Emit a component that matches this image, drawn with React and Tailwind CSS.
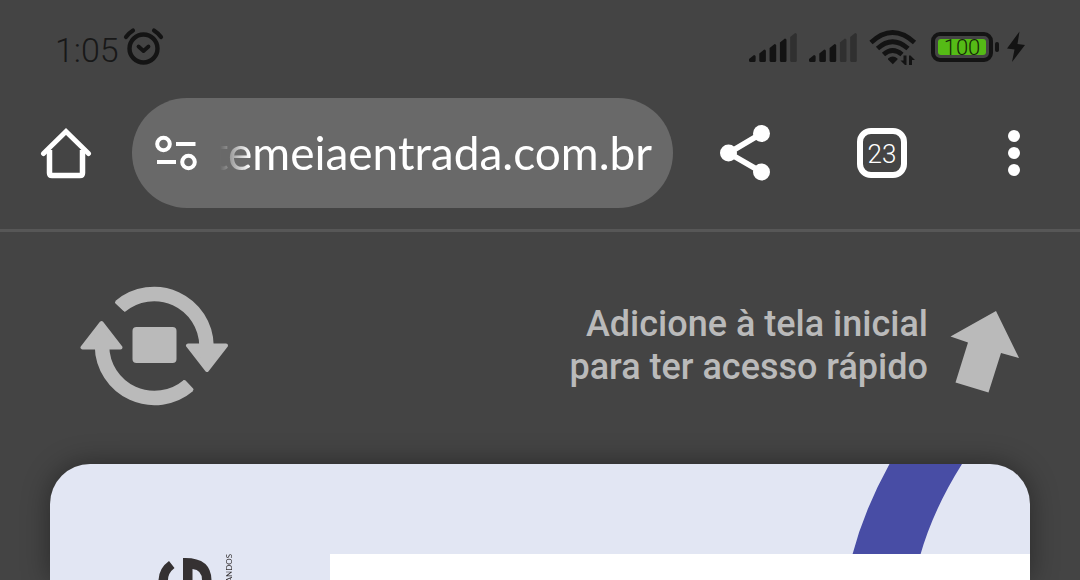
import React from "react";

function AlarmIcon() {
  return (
    <svg viewBox="124 27 42 40" className="h-10 w-[42px]" fill="none" stroke="#141414" strokeLinecap="round" aria-hidden="true">
      <circle cx="144.500" cy="48.500" r="14" strokeWidth="4.400" />
      <path d="M139.500 46.500l5 4.500 5-4.500" strokeWidth="3.800" strokeLinejoin="round" />
      <path d="M127 37q3-4 7-6.500M162 37q-3-4-7-6.500" strokeWidth="4.200" />
    </svg>
  );
}

function SignalIcon({ level }) {
  const tops = [22, 16.5, 11, 5.5, 0];
  return (
    <svg viewBox="0 -1 48 30" className="h-[30px] w-12" aria-hidden="true">
      {tops.map((top, i) => (
        <path
          key={top}
          d={`M${i * 10.3} ${top + 4}L${i * 10.3 + 5} ${top}Q${i * 10.3 + 6.6} ${top} ${i * 10.3 + 6.6} ${top + 1.5}V27.500q0 1.500-1.500 1.500H${i * 10.3 + 1.5}q-1.500 0-1.500-1.500z`}
          fill={i < level ? "#131313" : "#303030"}
        />
      ))}
    </svg>
  );
}

function WifiIcon() {
  return (
    <svg viewBox="869 28 48 38" className="h-[38px] w-12" fill="none" stroke="#131313" aria-hidden="true">
      <path d="M871 42.500Q892.500 22.500 914.500 42.500M877.500 48.500Q892.500 35 908 48.500M883.500 54.500Q892.500 46.500 902 54.500" strokeWidth="4.800" />
      <path d="M888 58.500q4.700-4 9.500 0v1l-4.700 4.800-4.800-4.800z" fill="#131313" stroke="none" />
      <path d="M906.500 55.500V65h-1.500l-4.500-4.500h3v-5zM909 65v-9.500h1.500l4.500 4.500h-3v5z" fill="#131313" stroke="none" />
    </svg>
  );
}

function BatteryIcon() {
  return (
    <div className="flex items-center gap-[2px]">
      <div className="flex h-[30px] w-[62px] rounded-[9px] border-4 border-[#141414] p-[3px]">
        <div className="flex flex-1 items-center justify-center rounded-[3px] bg-[#55bb16] pt-px text-[22px] leading-none font-light text-[#142608]">100</div>
      </div>
      <div className="h-[10px] w-[4px] rounded-full bg-[#141414]" />
    </div>
  );
}

function StatusBar() {
  return (
    <header className="flex h-[98px] items-center justify-between pr-[54px] pb-1 pl-[55px] font-['Roboto',sans-serif]">
      <div className="flex items-center gap-1">
        <time className="pt-[5px] text-[34px] leading-10 font-light text-[#181818]">1:05</time>
        <AlarmIcon />
      </div>
      <div className="flex items-center gap-3">
        <SignalIcon level={4} />
        <SignalIcon level={3} />
        <WifiIcon />
        <div className="flex items-center gap-[7px] pl-[2px]">
          <BatteryIcon />
          <svg viewBox="1006 32 20 32" className="h-8 w-5" fill="#131313" aria-hidden="true">
            <path d="M1019.500 32.500L1007 49.500l7.500 1-2.500 12.500 13-17-7.500-1z" />
          </svg>
        </div>
      </div>
    </header>
  );
}

function Toolbar() {
  return (
    <nav className="flex items-center border-b-[3px] border-[#575757] pr-14 pb-[21px] pl-10 text-white">
      <button type="button" aria-label="Início" className="mr-10">
        <svg viewBox="40 127 52 52" className="size-[52px]" fill="none" stroke="currentColor" aria-hidden="true">
          <path d="M43.500 153.500L66 131.500 88.500 153.500" strokeWidth="5" strokeLinecap="round" strokeLinejoin="miter" />
          <path d="M49.500 150v23q0 2.500 2.500 2.500h28q2.500 0 2.500-2.500v-23" strokeWidth="5.500" />
        </svg>
      </button>
      <div className="flex h-[110px] min-w-0 flex-1 items-center rounded-full bg-[#696969] pr-[21px] pl-[22px]">
        <button type="button" aria-label="Informações do site">
          <svg viewBox="154 134 44 38" className="h-[38px] w-11" fill="none" stroke="currentColor" strokeWidth="4" aria-hidden="true">
            <circle cx="163.500" cy="144" r="6.300" />
            <circle cx="188.500" cy="162" r="6.300" />
            <path d="M176 144h19.500M157 162h19" />
          </svg>
        </button>
        <input
          type="text"
          aria-label="Endereço"
          defaultValue="temeiaentrada.com.br"
          className="min-w-0 flex-1 bg-transparent text-right text-[46px] leading-14 outline-none [mask-image:linear-gradient(to_right,transparent_22px,black_52px)]"
        />
      </div>
      <button type="button" aria-label="Compartilhar" className="ml-11">
        <svg viewBox="717 123 56 60" className="h-[60px] w-14" fill="currentColor" aria-hidden="true">
          <path d="M761.500 133.500L728.500 153l33 19" fill="none" stroke="currentColor" strokeWidth="5.600" />
          <circle cx="761.500" cy="133.500" r="8.500" />
          <circle cx="728.500" cy="153" r="8.500" />
          <circle cx="761.500" cy="172" r="8.500" />
        </svg>
      </button>
      <button type="button" aria-label="Abas" className="ml-[84px] flex size-[50px] items-center justify-center rounded-[14px] border-[6px] border-white pt-px font-['Roboto',sans-serif] text-[26px] leading-none font-light">
        23
      </button>
      <button type="button" aria-label="Mais opções" className="ml-[97px] flex w-5 flex-col items-center gap-[5px]">
        <span className="size-3 rounded-full bg-white" />
        <span className="size-3 rounded-full bg-white" />
        <span className="size-3 rounded-full bg-white" />
      </button>
    </nav>
  );
}

function InstallPrompt() {
  return (
    <section className="flex h-[232px] items-center justify-between pr-[60px] pb-1 pl-20 text-[#bababa]">
      <button type="button" aria-label="Girar documento">
        <svg viewBox="80 285 149 122" className="h-[122px] w-[149px]" fill="currentColor" stroke="currentColor" aria-hidden="true">
          <rect x="132.500" y="327" width="44" height="36" rx="4" stroke="none" />
          <path d="M120 306.500A52.500 52.500 0 0 1 206.500 346M188.500 385.500A52.500 52.500 0 0 1 102 346" fill="none" strokeWidth="14.500" />
          <path d="M116.500 302.500l7.500 7M184.500 381.500l7.500 8" fill="none" strokeWidth="3" strokeLinecap="round" />
          <path d="M188 345.500h38L207 370zM82.500 347.500h38L101.500 323z" strokeWidth="4" strokeLinejoin="round" />
        </svg>
      </button>
      <div className="flex items-center gap-[22px]">
        <p className="text-right font-['Roboto',sans-serif] text-[36px] leading-[43px] font-medium">
          Adicione à tela inicial
          <br />
          para ter acesso rápido
        </p>
        <svg viewBox="950 298 70 96" className="h-24 w-[70px]" fill="currentColor" aria-hidden="true">
          <path d="M996 311l23 47-18-5-12.500 39.500-33-10L968 342.500l-17.500-6z" />
        </svg>
      </div>
    </section>
  );
}

function DocumentCard() {
  return (
    <main className="relative mx-[50px] flex flex-1 items-end overflow-hidden rounded-t-[40px] bg-[#e2e6f3] shadow-[0_0_28px_rgba(0,0,0,0.4)]">
      <svg viewBox="850 464 114 92" className="absolute top-0 right-[66px] h-[92px] w-[114px]" fill="#484da5" aria-hidden="true">
        <path d="M889.500 464H962Q933 510 920 556h-68Q864 510 889.500 464z" />
      </svg>
      <div className="flex h-[26px] w-[280px] items-start gap-3 pl-[107px]">
        <svg viewBox="157 554 56 26" className="h-[26px] w-14" fill="#353132" role="img" aria-label="Logo">
          <path d="M158.500 580q.5-12 10.500-19l5.500 7q-6.500 5-6.500 12zM183 558q28-1 28.500 22h-9.500q0-10-9.500-11v11H183z" />
        </svg>
        <span className="rotate-180 font-['Lato',sans-serif] text-[8px] leading-[8px] text-[#353132] [writing-mode:vertical-rl]">ANDOS</span>
      </div>
      <div className="relative h-[26px] flex-1 bg-white" />
    </main>
  );
}

export default function App() {
  return (
    <div className="flex min-h-screen flex-col overflow-hidden bg-[#444444] font-['Lato','Liberation_Sans',sans-serif]">
      <StatusBar />
      <Toolbar />
      <InstallPrompt />
      <DocumentCard />
    </div>
  );
}
